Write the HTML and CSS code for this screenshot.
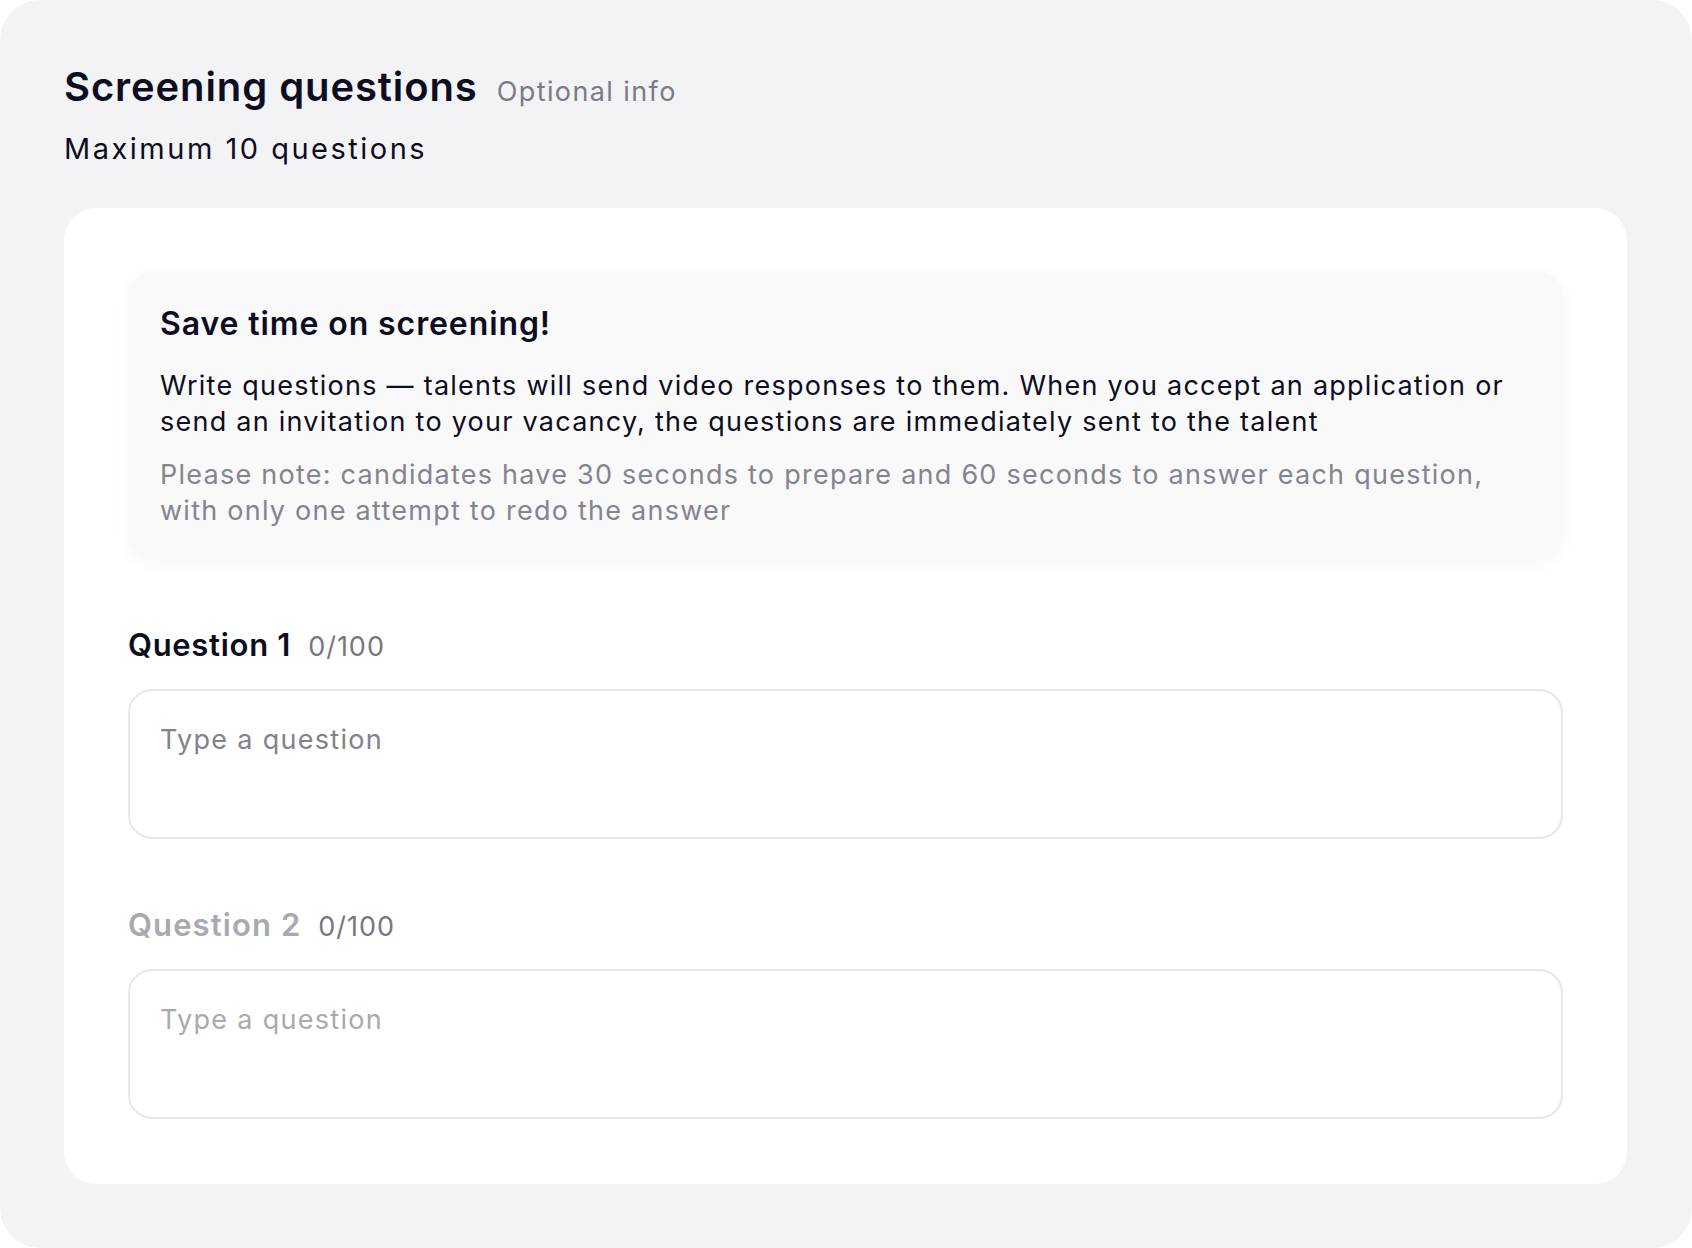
FILE: index.html
```html
<!DOCTYPE html>
<html lang="en">
<head>
  <meta charset="UTF-8">
  <title>Screening questions</title>
  <link rel="stylesheet" href="styles.css">
</head>
<body>
  <div class="panel">
    <div class="head">
      <h1>Screening questions</h1>
      <span class="optional">Optional info</span>
    </div>
    <p class="limit">Maximum 10 questions</p>

    <div class="card">
      <div class="tip">
        <h2>Save time on screening!</h2>
        <p class="tip-text">Write questions — talents will send video responses to them. When you accept an application or send an invitation to your vacancy, the questions are immediately sent to the talent</p>
        <p class="tip-note">Please note: candidates have 30 seconds to prepare and 60 seconds to answer each question, with only one attempt to redo the answer</p>
      </div>

      <div class="question">
        <label for="q1">Question 1 <span class="count">0/100</span></label>
        <textarea id="q1" placeholder="Type a question"></textarea>
      </div>

      <div class="question disabled">
        <label for="q2">Question 2 <span class="count">0/100</span></label>
        <textarea id="q2" placeholder="Type a question"></textarea>
      </div>
    </div>
  </div>
</body>
</html>
```

FILE: styles.css
```css
body {
  margin: 0;
  background: #fff;
  font-family: Inter, "Noto Sans", sans-serif;
  color: #0d0d21;
}
.panel {
  height: 1248px;
  box-sizing: border-box;
  background: #f3f3f5;
  border-radius: 40px;
  padding: 63px 65px 64px 64px;
}
.head {
  display: flex;
  align-items: baseline;
  gap: 19px;
}
h1 {
  margin: 0;
  font-size: 40px;
  line-height: 48px;
  font-weight: 600;
  letter-spacing: 0.9px;
}
.optional {
  font-size: 27px;
  letter-spacing: 1.4px;
  color: #7b7b87;
}
.limit {
  margin: 20px 0 0;
  font-size: 29px;
  line-height: 36px;
  letter-spacing: 2.5px;
}
.card {
  margin-top: 41px;
  background: #fff;
  border-radius: 32px;
  padding: 64px 64px 65px;
}
.tip {
  background: #f9f9fa;
  border-radius: 24px;
  padding: 32px 50px 30px 32px;
  box-shadow: 0 4px 16px rgba(20, 20, 40, 0.04);
}
h2 {
  margin: 0;
  font-size: 32px;
  line-height: 40px;
  font-weight: 600;
  letter-spacing: 0.9px;
}
.tip-text, .tip-note {
  margin: 0;
  font-size: 27px;
  line-height: 36px;
  letter-spacing: 1.25px;
}
.tip-text {
  margin-top: 24px;
}
.tip-note {
  margin-top: 17px;
  color: #84848f;
}
.question {
  margin-top: 66px;
}
.question label {
  display: flex;
  align-items: baseline;
  gap: 17px;
  height: 40px;
  font-size: 31px;
  line-height: 40px;
  font-weight: 600;
  letter-spacing: 0.7px;
}
.count {
  font-weight: 400;
  font-size: 27px;
  line-height: 1;
  letter-spacing: 1px;
  color: #767682;
}
.question textarea {
  display: block;
  width: 100%;
  height: 150px;
  box-sizing: border-box;
  margin-top: 24px;
  padding: 31px 30px 20px;
  border: 2px solid #e7e7eb;
  border-radius: 24px;
  font-family: inherit;
  font-size: 27px;
  line-height: 36px;
  letter-spacing: 1.3px;
  color: #0d0d21;
  resize: none;
  outline: none;
}
.question textarea::placeholder {
  color: #82828d;
}
.question.disabled label {
  color: #a9a9b1;
  letter-spacing: 1.1px;
}
.question.disabled .count {
  color: #767682;
  letter-spacing: 1px;
}
.question.disabled textarea::placeholder {
  color: #a9a9b1;
}
```
